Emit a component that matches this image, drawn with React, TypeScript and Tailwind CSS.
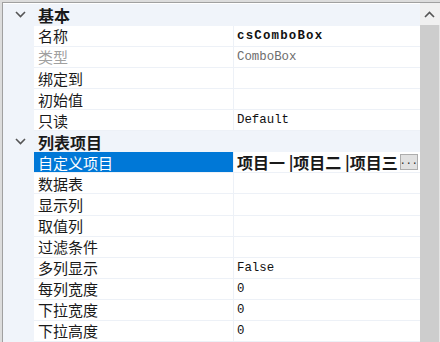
import React from "react";

type Row =
    | { kind: "group"; label: string }
    | { kind: "prop"; name: string; value?: string; muted?: boolean; bold?: boolean; selected?: boolean; list?: boolean };

const rows: Row[] = [
    { kind: "group", label: "基本" },
    { kind: "prop", name: "名称", value: "csComboBox", bold: true },
    { kind: "prop", name: "类型", value: "ComboBox", muted: true },
    { kind: "prop", name: "绑定到" },
    { kind: "prop", name: "初始值" },
    { kind: "prop", name: "只读", value: "Default" },
    { kind: "group", label: "列表项目" },
    { kind: "prop", name: "自定义项目", selected: true, list: true },
    { kind: "prop", name: "数据表" },
    { kind: "prop", name: "显示列" },
    { kind: "prop", name: "取值列" },
    { kind: "prop", name: "过滤条件" },
    { kind: "prop", name: "多列显示", value: "False" },
    { kind: "prop", name: "每列宽度", value: "0" },
    { kind: "prop", name: "下拉宽度", value: "0" },
    { kind: "prop", name: "下拉高度", value: "0" },
];

const Chevron = ({ up = false }: { up?: boolean }) => (
    <svg width="11" height="7" viewBox="0 0 11 7" className="block">
        <path
            d={up ? "M1 6 L5.5 1.5 L10 6" : "M1 1 L5.5 5.5 L10 1"}
            fill="none"
            stroke="#555"
            strokeWidth="1.6"
        />
    </svg>
);

const GroupRow = ({ label, first }: { label: string; first?: boolean }) => (
    <div className={`flex items-center bg-[#f0f4fa] ${first ? "h-[22px]" : "h-[21.25px]"}`}>
        <div className="flex w-[31px] shrink-0 justify-start pl-[12px]">
            <Chevron />
        </div>
        <span className="pl-[4px] text-[16px] font-bold leading-none text-[#1a1a1a]">{label}</span>
    </div>
);

const PropRow = ({ row }: { row: Extract<Row, { kind: "prop" }> }) => (
    <div className="flex h-[21.25px]">
        <div className="w-[31px] shrink-0 bg-[#f0f4fa]" />
        <div
            className={`flex w-[199px] shrink-0 items-center border-b border-[#edf1f7] pl-[4px] text-[15px] leading-none ${
                row.selected ? "bg-[#0078d7] text-white" : row.muted ? "text-[#a0a0a0]" : "text-[#1a1a1a]"
            }`}
        >
            {row.name}
        </div>
        <div className="w-px shrink-0 bg-[#edf1f7]" />
        <div className="relative flex min-w-0 flex-1 items-center overflow-hidden border-b border-[#edf1f7] pl-[3px]">
            {row.list ? (
                <>
                    <span className="whitespace-nowrap pr-[22px] text-[16px] font-bold leading-none text-[#1a1a1a]">
                        项目一 |项目二 |项目三
                    </span>
                    <div className="absolute top-[2px] right-[2px] flex h-[16px] w-[18px] items-end justify-center border border-[#adadad] bg-[#e1e1e1] pb-[2px] font-['Liberation_Mono',monospace] text-[10px] leading-none text-[#222]">
                        ...
                    </div>
                </>
            ) : row.value ? (
                <span
                    className={`whitespace-nowrap font-['Liberation_Mono',monospace] text-[12.4px] leading-none ${
                        row.bold ? "font-bold tracking-[1.2px] text-[#111]" : row.muted ? "text-[#6d6d6d]" : "text-[#111]"
                    }`}
                >
                    {row.value}
                </span>
            ) : null}
        </div>
    </div>
);

export default function App() {
    return (
        <div className="flex h-[342px] w-[440px] overflow-hidden bg-[#dcdcdc] pt-[2px] pl-[2px] font-['Noto_Sans_CJK_SC',sans-serif]">
            <div className="flex flex-1 border-t border-l border-[#a0a0a0] bg-white">
                <div className="flex min-w-0 flex-1 flex-col pt-[1px]">
                    {rows.map((r, i) =>
                        r.kind === "group" ? <GroupRow key={i} label={r.label} first={i === 0} /> : <PropRow key={i} row={r} />
                    )}
                </div>
                <div className="flex w-[22px] shrink-0 flex-col">
                    <div className="flex h-[22px] shrink-0 items-center justify-center bg-[#f0f0f0] pr-[3px]">
                        <Chevron up />
                    </div>
                    <div className="flex flex-1">
                        <div className="w-[19px] bg-[#cdcdcd]" />
                        <div className="w-[2px] bg-[#e6e6e6]" />
                        <div className="w-px bg-[#c0c0c0]" />
                    </div>
                </div>
            </div>
        </div>
    );
}
